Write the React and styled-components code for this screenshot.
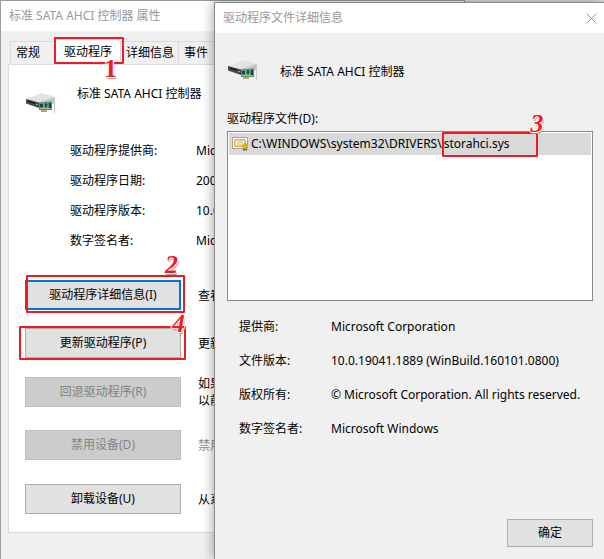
import React from 'react';
import styled, { createGlobalStyle, css } from 'styled-components';

const GlobalStyle = createGlobalStyle`
    * {
        box-sizing: border-box;
    }

    body {
        margin: 0;
        overflow: hidden;
        background: #f0f0f0;
        color: #000;
        font: 12px/18px "Noto Sans", "Noto Sans CJK SC", sans-serif;
    }
`

const Desktop = styled.main`
    position: relative;
    height: 100vh;
    overflow: hidden;
    background: #e1e1e1;
`

const PropertiesWindow = styled.section`
    width: 465px;
    height: 100%;
    background: #f0f0f0;
    border: 1px solid #9b9b9b;
    border-bottom: 0;
`

const DetailsWindow = styled.section`
    position: absolute;
    top: 2px;
    left: 214px;
    right: 0;
    bottom: 0;
    display: flex;
    flex-direction: column;
    background: #f0f0f0;
    border: 1px solid #8c8c8c;
    border-width: 1px 0 0 1px;
    box-shadow: 0 0 12px rgba(0, 0, 0, 0.4);
`

const TitleBar = styled.header`
    display: flex;
    align-items: center;
    justify-content: space-between;
    height: 30px;
    padding: 0 7px 0 8px;
    background: #fff;
    color: #999;
`

const WindowTitle = styled.h1`
    margin: 0;
    font-size: 12px;
    font-weight: 400;
    white-space: nowrap;
`

const CloseButton = styled.button`
    display: flex;
    padding: 0;
    border: 0;
    background: none;
    color: #999;
`

const TabRow = styled.div`
    display: flex;
    align-items: flex-end;
    height: 33px;
    padding: 0 9px;
`

const Tab = styled.button`
    display: block;
    width: ${props => props.$width};
    height: ${props => props.$active ? '25px' : '23px'};
    padding: 0 ${props => props.$active ? '8px' : '5px'};
    border: 1px solid #d9d9d9;
    border-bottom: 0;
    border-left-width: ${props => props.$active ? '0' : '1px'};
    border-right-width: 0;
    background: ${props => props.$active ? '#fff' : '#f0f0f0'};
    color: #000;
    font: inherit;
    text-align: left;
    white-space: nowrap;
`

const Page = styled.div`
    margin: 0 7px;
    padding: 20px 16px 16px;
    border: 1px solid #dcdcdc;
    background: #fff;
`

const DeviceHeader = styled.div`
    display: flex;
    gap: 20px;
    min-height: 36px;
`

const DeviceName = styled.span`
    white-space: nowrap;
`

const Facts = styled.dl`
    display: grid;
    grid-template-columns: ${props => props.$labelWidth} 1fr;
    row-gap: ${props => props.$gap};
    margin: 0;
    padding: ${props => props.$padding};
    white-space: nowrap;

    dt, dd {
        margin: 0;
    }
`

const Actions = styled.div`
    display: grid;
    grid-template-columns: 156px 1fr;
    grid-template-rows: 30px 30px 32px 38px 34px;
    column-gap: 17px;
    row-gap: 18px;
    align-items: center;
`

const Hint = styled.p`
    margin: 0;
    line-height: 17px;
    white-space: pre;
    color: ${props => props.$muted ? '#8c8c8c' : '#000'};
`

const Button = styled.button`
    display: block;
    width: 100%;
    height: 30px;
    padding: 0;
    border: 1px solid #adadad;
    background: #e1e1e1;
    color: #000;
    font: inherit;

    ${props => props.$focused && css`
        border: 2px solid #0078d7;
    `}

    &:disabled {
        border-color: #bfbfbf;
        background: #ccc;
        color: #838383;
    }
`

const Marked = styled.div`
    position: relative;
`

const MarkBox = styled.span`
    position: absolute;
    inset: ${props => props.$inset};
    border: 2px solid #ed1c24;
    border-radius: 1px;
    pointer-events: none;
`

const MarkNumber = styled.span`
    position: absolute;
    z-index: 1;
    top: ${props => props.$top};
    right: ${props => props.$right};
    color: #ed1c24;
    font: ${props => props.$upright ? 'normal' : 'italic'} bold 26px/20px "Liberation Serif", serif;
    text-shadow: 1px 0 #fff, -1px 0 #fff, 0 1px #fff, 0 -1px #fff, 1px 2px 1px #999;
`

const DetailsBody = styled.div`
    display: flex;
    flex: 1;
    flex-direction: column;
    padding: 19px 11px 12px 12px;
`

const DetailsHeader = styled(DeviceHeader)`
    gap: 21px;
    min-height: 58px;

    ${DeviceName} {
        padding-top: 11px;
    }
`

const FileList = styled.div`
    height: 170px;
    margin-top: 3px;
    padding: 1px;
    border: 1px solid #828790;
    background: #fff;
`

const FileRow = styled.div`
    display: flex;
    align-items: center;
    gap: 2px;
    height: 22px;
    padding-left: 3px;
    background: #d9d9d9;
    white-space: nowrap;
`

const Footer = styled.footer`
    display: flex;
    justify-content: flex-end;
    margin-top: auto;

    ${Button} {
        width: 86px;
        height: 28px;
    }
`

const ControllerIcon = () => (
    <svg width="32" height="32" viewBox="0 0 32 32" aria-hidden="true">
        <path d="M1 14 17 8 30 12 14 17Z" fill="#e3e3e6" />
        <path d="M1 14 14 17.5V23L1 18.5Z" fill="#4a4a4c" />
        <path d="M3 16 10 18.3" stroke="#1e1e1e" strokeWidth="1.6" />
        <path d="M11 19.6h2" stroke="#4fd06a" />
        <path d="M14 17 30 12V18L14 23Z" fill="#c4c5ca" />
        <path d="M14 17.5 27 16.5V25L14 25Z" fill="#3f9873" />
        <path d="M15 19h3v3h-3zM19.5 18.5h3v3h-3zM23.5 18h2.5v5h-2.5z" fill="#2b4038" />
        <path d="M15 23.5h11M19 18v5M23 18v6" stroke="#a9d8c1" strokeWidth=".7" />
        <path d="M16 25h6v2h-6z" fill="#d39a58" />
        <path d="M28 12.5 29.5 13V28" stroke="#c8c8c8" fill="none" />
    </svg>
)

const CertificateIcon = () => (
    <svg width="17" height="16" viewBox="0 0 17 16" aria-hidden="true">
        <path d="M.5 1.5h15v11H.5z" fill="#fff" stroke="#a0a0a0" />
        <rect x="2.7" y="3.7" width="10.6" height="6.6" rx="1" fill="#fff" stroke="#e0b020" strokeWidth="1.4" />
        <path d="M5 6h6M5 8h5" stroke="#b0b0b0" />
        <path d="M11 11v4l2-1 2 1v-4z" fill="#2475c7" />
        <circle cx="13" cy="10" r="2.9" fill="#e9ae14" />
    </svg>
)

const driverFacts = [
    ['驱动程序提供商:', 'Microsoft'],
    ['驱动程序日期:', '2006/6/21'],
    ['驱动程序版本:', '10.0.19041.1889'],
    ['数字签名者:', 'Microsoft Windows'],
]

const fileFacts = [
    ['提供商:', 'Microsoft Corporation'],
    ['文件版本:', '10.0.19041.1889 (WinBuild.160101.0800)'],
    ['版权所有:', '© Microsoft Corporation. All rights reserved.'],
    ['数字签名者:', 'Microsoft Windows'],
]

const FactList = ({ items, ...rest }) => (
    <Facts {...rest}>
        {items.map(([label, value]) => (
            <React.Fragment key={label}>
                <dt>{label}</dt>
                <dd>{value}</dd>
            </React.Fragment>
        ))}
    </Facts>
)

const App = () => (
    <Desktop>
        <GlobalStyle />
        <PropertiesWindow>
            <TitleBar>
                <WindowTitle>标准 SATA AHCI 控制器 属性</WindowTitle>
            </TitleBar>
            <TabRow>
                <Tab $width="46px">常规</Tab>
                <Marked>
                    <Tab $active $width="64px">驱动程序</Tab>
                    <MarkBox $inset="-2px -4px 0 -2px" />
                    <MarkNumber $upright $top="20px" $right="3px">1</MarkNumber>
                </Marked>
                <Tab $width="58px">详细信息</Tab>
                <Tab $width="58px">事件</Tab>
            </TabRow>
            <Page>
                <DeviceHeader>
                    <ControllerIcon />
                    <DeviceName>标准 SATA AHCI 控制器</DeviceName>
                </DeviceHeader>
                <FactList items={driverFacts} $labelWidth="126px" $gap="12px" $padding="21px 0 30px 45px" />
                <Actions>
                    <Marked>
                        <Button $focused>驱动程序详细信息(I)</Button>
                        <MarkBox $inset="-5px -4px -3px 1px" />
                        <MarkNumber $top="-25px" $right="3px">2</MarkNumber>
                    </Marked>
                    <Hint>查看</Hint>
                    <Marked>
                        <Button>更新驱动程序(P)</Button>
                        <MarkBox $inset="-2px -5px -2px -6px" />
                        <MarkNumber $top="-14px" $right="-4px">4</MarkNumber>
                    </Marked>
                    <Hint>更新</Hint>
                    <Button disabled>回退驱动程序(R)</Button>
                    <Hint>{'如果\n以前'}</Hint>
                    <Button disabled>禁用设备(D)</Button>
                    <Hint $muted>禁用</Hint>
                    <Button>卸载设备(U)</Button>
                    <Hint>从系</Hint>
                </Actions>
            </Page>
        </PropertiesWindow>
        <DetailsWindow>
            <TitleBar>
                <WindowTitle>驱动程序文件详细信息</WindowTitle>
                <CloseButton aria-label="关闭">
                    <svg width="11" height="11" viewBox="0 0 11 11">
                        <path d="M.5.5l10 10M10.5.5l-10 10" stroke="currentColor" />
                    </svg>
                </CloseButton>
            </TitleBar>
            <DetailsBody>
                <DetailsHeader>
                    <ControllerIcon />
                    <DeviceName>标准 SATA AHCI 控制器</DeviceName>
                </DetailsHeader>
                <div id="files-label">驱动程序文件(D):</div>
                <FileList role="listbox" aria-labelledby="files-label">
                    <FileRow role="option" aria-selected="true">
                        <CertificateIcon />
                        <span>C:\WINDOWS\system32\DRIVERS\</span>
                        <Marked>
                            storahci.sys
                            <MarkBox $inset="-3px -28px -4px -2px" />
                            <MarkNumber $top="-21px" $right="-34px">3</MarkNumber>
                        </Marked>
                    </FileRow>
                </FileList>
                <FactList items={fileFacts} $labelWidth="92px" $gap="16px" $padding="17px 0 0 12px" />
                <Footer>
                    <Button>确定</Button>
                </Footer>
            </DetailsBody>
        </DetailsWindow>
    </Desktop>
)

export default App;
